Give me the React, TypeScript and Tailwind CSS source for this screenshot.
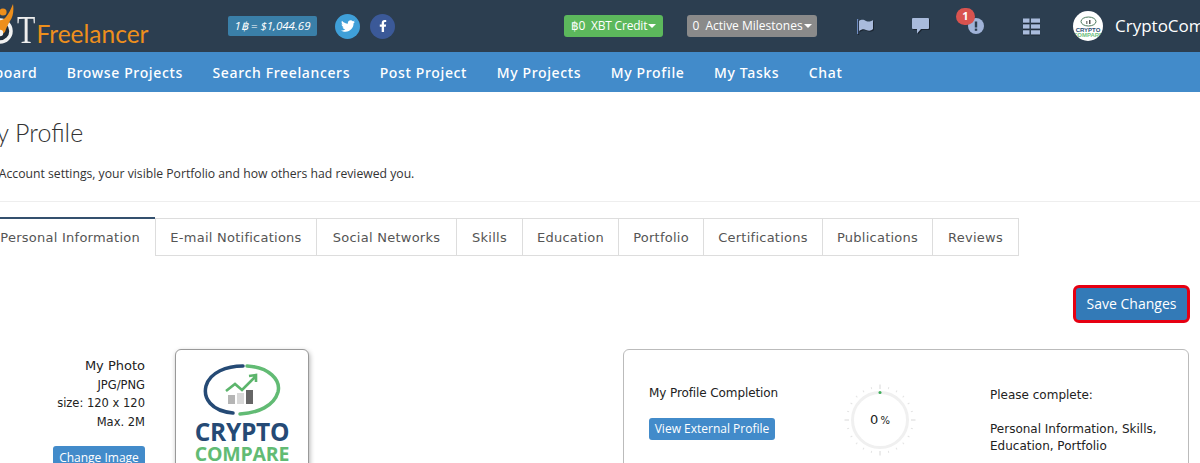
import { FaTwitter, FaFacebookF } from "react-icons/fa";

const navItems = ["Dashboard", "Browse Projects", "Search Freelancers", "Post Project", "My Projects", "My Profile", "My Tasks", "Chat"];
const tabs = [
  { label: "E-mail Notifications", width: "w-[161px]" },
  { label: "Social Networks", width: "w-[140px]" },
  { label: "Skills", width: "w-[66px]" },
  { label: "Education", width: "w-[96px]" },
  { label: "Portfolio", width: "w-[85px]" },
  { label: "Certifications", width: "w-[119px]" },
  { label: "Publications", width: "w-[110px]" },
  { label: "Reviews", width: "w-[86px]" },
];

function LogoMark() {
  return (
    <svg width="36" height="52" viewBox="-19 0 36 52" className="shrink-0">
      <circle cx="0" cy="31" r="11" fill="#1f2c3a" stroke="#f2f2f2" strokeWidth="3.5" />
      <path d="M-7 18 C-2 21 3 21 6 17 C9 13 11 9 13 4 C14 11 13 17 10 21 C8 25 6 28 5 32 L0 36 L-5 30 Z" fill="#ee8f1c" />
      <circle cx="3" cy="12" r="3.6" fill="#ee8f1c" />
      <circle cx="0" cy="33" r="3.2" fill="#f2f2f2" />
    </svg>
  );
}

function FlagIcon() {
  return (
    <svg width="17" height="15" viewBox="0 0 17 15" fill="#a9bbdc" className="drop-shadow-[1px_1px_0_#1a2430]">
      <rect x="0" y="0" width="1.2" height="15" fill="#6f8cc0" />
      <path d="M2 2 C5 0 7 1 9 2 C12 3 14 2.5 16 1 V10 C14 12 12 12 9 11 C7 10 5 10 2 12 Z" />
    </svg>
  );
}

function ChatIcon() {
  return (
    <svg width="17" height="16" viewBox="0 0 17 16" fill="#a9bbdc" className="drop-shadow-[1px_1px_0_#1a2430]">
      <path d="M1 0 H16 Q17 0 17 1 V10 Q17 11 16 11 H9 L5 15.5 V11 H1 Q0 11 0 10 V1 Q0 0 1 0 Z" />
    </svg>
  );
}

function AlertIcon() {
  return (
    <svg width="16" height="16" viewBox="0 0 16 16">
      <circle cx="8" cy="8" r="8" fill="#a0b3d8" />
      <rect x="6.8" y="3.5" width="2.4" height="6" fill="#2c3e50" />
      <rect x="6.8" y="10.6" width="2.4" height="2.2" fill="#2c3e50" />
    </svg>
  );
}

function ListIcon() {
  return (
    <svg width="17" height="17" viewBox="0 0 17 17" fill="#a9bbdc" className="drop-shadow-[0_1px_0_#1a2430]">
      <rect x="0" y="0.5" width="6.5" height="4.2" />
      <rect x="8" y="0.5" width="9" height="4.2" />
      <rect x="0" y="6.4" width="6.5" height="4.2" />
      <rect x="8" y="6.4" width="9" height="4.2" />
      <rect x="0" y="12.3" width="6.5" height="4.2" />
      <rect x="8" y="12.3" width="9" height="4.2" />
    </svg>
  );
}

function Caret() {
  return <span className="ml-[1px] inline-block border-x-[4px] border-t-[4px] border-x-transparent border-t-white align-middle" />;
}

function Avatar() {
  return (
    <div className="flex h-[30px] w-[30px] flex-col items-center justify-end overflow-hidden rounded-full bg-white pb-[3px] font-['Liberation_Sans',sans-serif] font-bold leading-[5px]">
      <svg width="17" height="11" viewBox="0 0 17 11" className="mb-[1px]">
        <ellipse cx="8.5" cy="5.5" rx="7.5" ry="4.5" fill="none" stroke="#4d7a5f" strokeWidth="1" />
        <rect x="6" y="5" width="1.5" height="3" fill="#888" />
        <rect x="9" y="4" width="1.5" height="4" fill="#555" />
      </svg>
      <span className="text-[6px] text-[#2a4d75]">CRYPTO</span>
      <span className="text-[6px] text-[#6fc080]">COMPARE</span>
    </div>
  );
}

function Gauge() {
  const ticks = Array.from({ length: 24 }, (_, i) => i * 15);
  return (
    <svg width="72" height="72" viewBox="-36 -36 72 72" className="absolute inset-0">
      {ticks.map((a) => {
        const long = a % 90 === 0;
        return (
          <line
            key={a}
            x1="0"
            y1={long ? -31 : -32}
            x2="0"
            y2={long ? -35.5 : -34}
            stroke={long ? "#d8d8d8" : "#e4e4e4"}
            strokeWidth="1"
            transform={`rotate(${a})`}
          />
        );
      })}
      <circle r="27.5" fill="none" stroke="#f0f0f0" strokeWidth="3" />
      <circle cx="0" cy="-27.5" r="1.5" fill="#3fae5a" />
    </svg>
  );
}

function CompanyLogo() {
  return (
    <div className="flex flex-col items-center pt-[14px] font-['Open_Sans',sans-serif] font-bold">
      <svg width="78" height="52" viewBox="0 0 78 52">
        <path d="M30 49 C8 47 0 34 3 22 C7 8 24 2 40 2" fill="none" stroke="#254a75" strokeWidth="3.5" strokeLinecap="round" />
        <path d="M44 2 C66 3 78 16 75 28 C71 42 55 49 37 50" fill="none" stroke="#62bb74" strokeWidth="3.5" strokeLinecap="round" />
        <rect x="25" y="31" width="7" height="9" fill="#b5b5b5" />
        <rect x="34" y="29" width="7" height="11" fill="#d8d8d8" />
        <rect x="43" y="26" width="7" height="14" fill="#666" />
        <path d="M23 27 L32 20 L39 26 L52 13 M46 12 L53 11 L53 18" fill="none" stroke="#5cb56c" strokeWidth="2.6" />
      </svg>
      <span className="mt-[4px] text-[24.5px] leading-[24px] tracking-[-0.3px] text-[#254a75]">CRYPTO</span>
      <span className="text-[19.5px] leading-[19px] tracking-[-0.2px] text-[#62bb74]">COMPARE</span>
    </div>
  );
}

export default function App() {
  return (
    <div className="h-[463px] w-[1200px] overflow-hidden bg-white font-['DejaVu_Sans',sans-serif] text-[#222]">
      <header className="flex h-[52px] items-center bg-[#2c3e50] [&>*]:shrink-0">
        <div className="ml-[-19px] flex h-[52px] w-[247px] items-start">
          <LogoMark />
          <span className="mt-[10px] origin-left scale-x-75 font-['Liberation_Serif',serif] text-[40px] leading-[40px] text-[#eeeeee]">T</span>
          <span className="ml-[-5px] mt-[19px] font-['Lato',sans-serif] text-[24.5px] leading-[30px] text-[#ee8f1c]">Freelancer</span>
        </div>
        <span className="flex h-[20px] w-[89px] items-center justify-center rounded-[2px] bg-[#3a7fa8] font-['Open_Sans',sans-serif] text-[11.5px] italic text-white">
          1฿ = $1,044.69
        </span>
        <span className="ml-[18px] flex h-[25px] w-[25px] items-center justify-center rounded-full bg-[#3f9fd8] text-white">
          <FaTwitter size={14} />
        </span>
        <span className="ml-[10px] flex h-[25px] w-[25px] items-center justify-center rounded-full bg-[#3b5998] text-white">
          <FaFacebookF size={12} />
        </span>
        <span className="ml-[169px] flex h-[22px] w-[99px] items-center justify-center rounded-[3px] bg-[#5cb85c] font-['Open_Sans',sans-serif] text-[12px] tracking-[-0.2px] text-white">
          ฿0&nbsp; XBT Credit
          <Caret />
        </span>
        <span className="ml-[24px] flex h-[22px] w-[130px] items-center justify-center rounded-[3px] bg-[#8a8a8a] font-['Open_Sans',sans-serif] text-[12px] text-white">
          0&nbsp; Active Milestones
          <Caret />
        </span>
        <span className="ml-[40px] flex">
          <FlagIcon />
        </span>
        <span className="ml-[38px] flex">
          <ChatIcon />
        </span>
        <span className="relative ml-[39px] flex">
          <AlertIcon />
          <span className="absolute left-[-12px] top-[-10px] flex h-[17px] w-[19px] items-center justify-center rounded-full bg-[#d9534f] font-['Open_Sans',sans-serif] text-[11px] font-bold text-white">
            1
          </span>
        </span>
        <span className="ml-[39px] flex">
          <ListIcon />
        </span>
        <span className="ml-[33px]">
          <Avatar />
        </span>
        <span className="ml-[12px] whitespace-nowrap font-['Open_Sans',sans-serif] text-[17px] text-white">CryptoCompare</span>
      </header>

      <nav className="flex h-[40px] items-center gap-[29.5px] whitespace-nowrap bg-[#428bca] font-['Noto_Sans',sans-serif] text-[14px] font-medium tracking-[0.65px] text-white">
        <span className="ml-[-42px]">{navItems[0]}</span>
        {navItems.slice(1).map((item) => (
          <span key={item}>{item}</span>
        ))}
      </nav>

      <section className="ml-[-26px] border-b border-[#eeeeee] pb-[19px] pt-[23px]">
        <h1 className="font-['Lato',sans-serif] text-[25px] font-light leading-[34px] text-[#333]">My Profile</h1>
        <p className="mt-[17px] whitespace-nowrap font-['Open_Sans',sans-serif] text-[12.2px] leading-[16px] text-[#333]">
          Edit Account settings, your visible Portfolio and how others had reviewed you.
        </p>
      </section>

      <div className="mt-[15px] flex h-[39px] whitespace-nowrap text-[13px] tracking-[0.25px] text-[#555]">
        <span className="ml-[-20px] flex w-[175px] shrink-0 items-center justify-end border-t-2 border-t-[#34506e] pr-[15px]">
          Personal Information
        </span>
        <span className="mt-[1px] w-0 border-l border-[#ddd]" />
        {tabs.map((t) => (
          <span key={t.label} className={`${t.width} mt-[1px] flex shrink-0 items-center justify-center border-y border-r border-[#ddd] pt-[1px]`}>
            {t.label}
          </span>
        ))}
      </div>

      <div className="mt-[29px] flex justify-end pr-[10px]">
        <button className="h-[38px] w-[117px] rounded-[6px] border-[3px] border-[#e60012] bg-[#337ab7] pb-[2px] font-['Open_Sans',sans-serif] text-[14px] text-white">
          Save Changes
        </button>
      </div>

      <div className="mt-[26px] flex">
        <div className="flex w-[145px] flex-col items-end pt-[8px] text-[11.5px] leading-[18.5px]">
          <span className="text-[13px]">My Photo</span>
          <span>JPG/PNG</span>
          <span>size: 120 x 120</span>
          <span>Max. 2M</span>
          <button className="mt-[15px] h-[24px] w-[92px] shrink-0 rounded-[3px] bg-[#428bca] font-['Open_Sans',sans-serif] text-[12px] text-white">
            Change Image
          </button>
        </div>
        <div className="ml-[30px] h-[130px] w-[134px] rounded-[6px] border border-[#999] bg-white shadow-[1px_2px_5px_rgba(0,0,0,0.3)]">
          <CompanyLogo />
        </div>
        <div className="ml-[314px] flex h-[130px] w-[566px] rounded-[6px] border border-[#bbb]">
          <div className="ml-[25px] w-[195px] pt-[35px]">
            <p className="text-[12px] leading-[16px] tracking-[-0.1px]">My Profile Completion</p>
            <button className="mt-[17px] h-[22px] w-[126px] rounded-[3px] bg-[#428bca] font-['Open_Sans',sans-serif] text-[12px] text-white">
              View External Profile
            </button>
          </div>
          <div className="relative mt-[34px] flex h-[72px] w-[72px] items-center justify-center text-[13px]">
            <Gauge />
            <span className="relative">
              0<span className="ml-[2px] text-[10px]">%</span>
            </span>
          </div>
          <div className="ml-[74px] w-[180px] pt-[37px] text-[12px] leading-[17px]">
            <p>Please complete:</p>
            <p className="mt-[17px]">Personal Information, Skills, Education, Portfolio</p>
          </div>
        </div>
      </div>
    </div>
  );
}
